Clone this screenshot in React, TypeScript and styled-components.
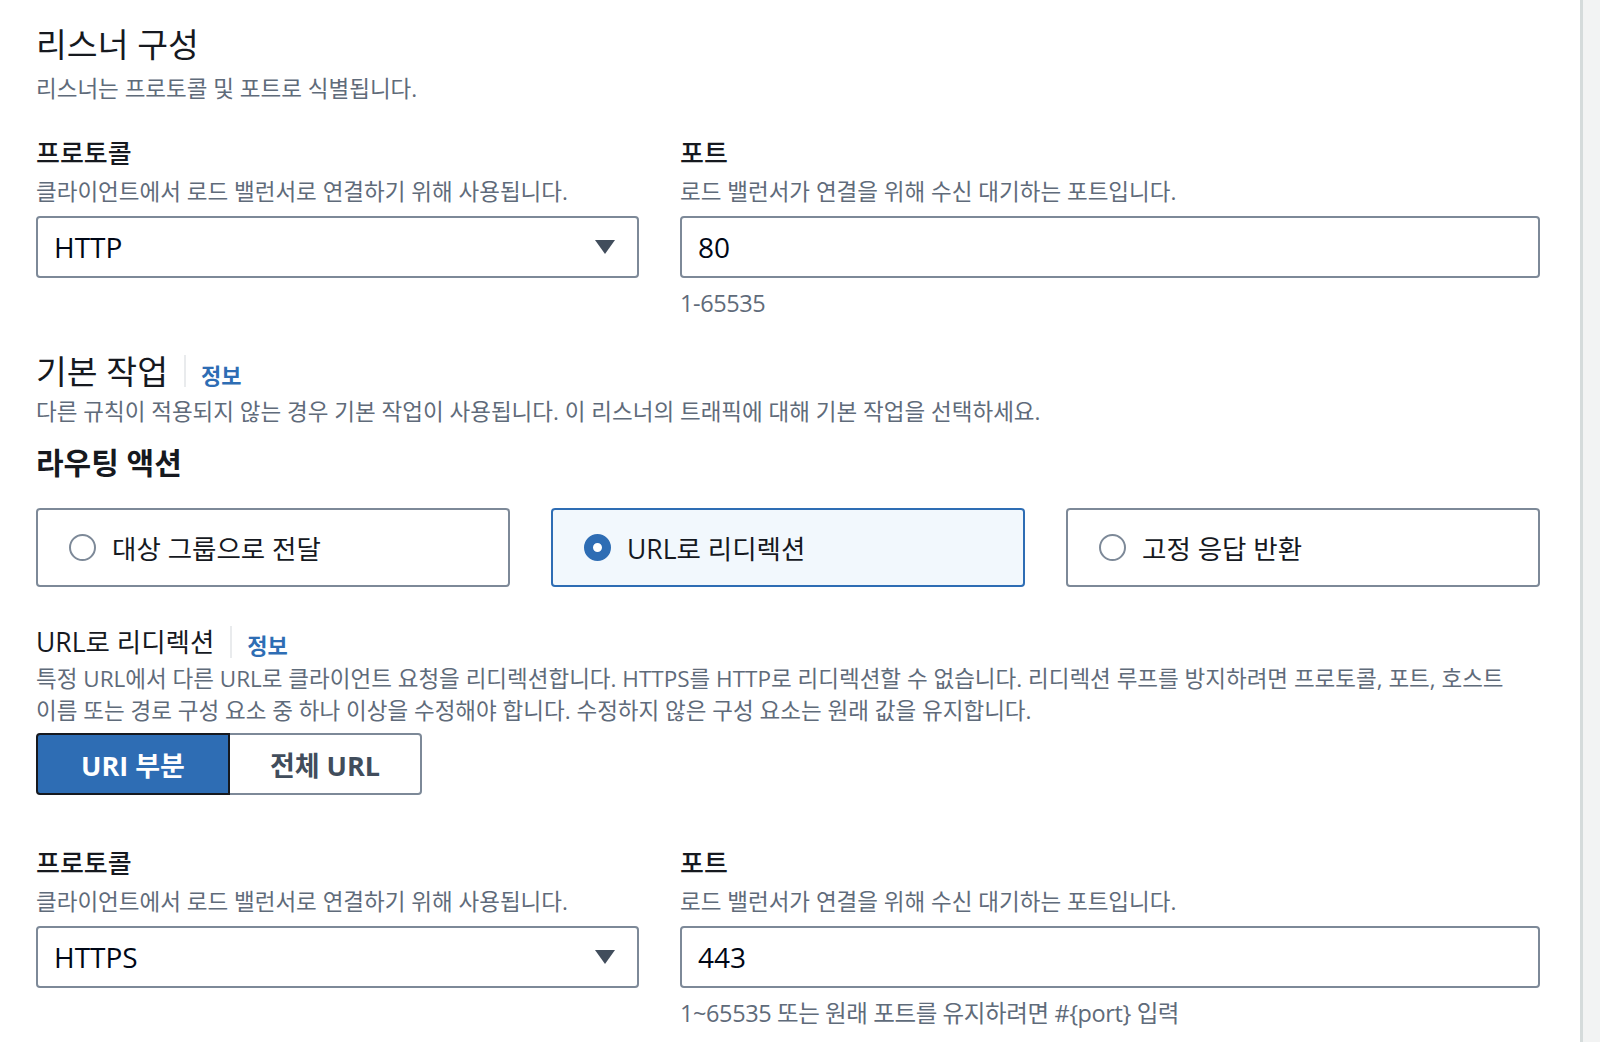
import React from "react";
import styled, { createGlobalStyle } from "styled-components";

const FONT = `"Open Sans", "Noto Sans CJK KR", sans-serif`;

const GlobalStyle = createGlobalStyle`
  html, body {
    margin: 0;
    padding: 0;
    background: #ffffff;
  }
  body {
    font-family: ${FONT};
    color: #16191f;
    -webkit-font-smoothing: antialiased;
  }
  * {
    box-sizing: border-box;
  }
`;

const Page = styled.div`
  display: flex;
  min-height: 1042px;
  background: #ffffff;
`;

const Main = styled.main`
  flex: 1;
  min-width: 0;
  padding: 24px 40px 0 36px;
`;

const SideRail = styled.aside`
  width: 20px;
  flex-shrink: 0;
  background: #f2f3f3;
  border-left: 3px solid #d5dbdb;
`;

const Title = styled.h2<{ $small?: boolean }>`
  margin: 0;
  font-size: ${(p) => (p.$small ? "26.5px" : "33.5px")};
  line-height: ${(p) => (p.$small ? "36px" : "40px")};
  font-weight: 400;
  color: #16191f;
`;

const HeadingRow = styled.div<{ $mt: number }>`
  display: flex;
  align-items: center;
  margin-top: ${(p) => p.$mt}px;
`;

const InfoDivider = styled.span`
  width: 2px;
  height: 32px;
  margin: 0 15px 0 16px;
  background: #e9ebed;
`;

const InfoLink = styled.a`
  padding-top: 5px;
  font-size: 22px;
  font-weight: 700;
  color: #2e6db4;
  text-decoration: none;
  cursor: pointer;
`;

const Description = styled.p<{ $mt: number }>`
  margin: ${(p) => p.$mt}px 0 0;
  font-size: 22.5px;
  line-height: 32px;
  color: #5f6b7a;
`;

const GroupTitle = styled.h3`
  margin: 17px 0 0;
  font-size: 30px;
  line-height: 36px;
  font-weight: 700;
  color: #16191f;
`;

const FieldGrid = styled.div<{ $mt: number }>`
  display: grid;
  grid-template-columns: 603px 1fr;
  column-gap: 41px;
  align-items: start;
  margin-top: ${(p) => p.$mt}px;
`;

const Field = styled.div`
  display: flex;
  flex-direction: column;
`;

const Label = styled.label`
  font-size: 26px;
  line-height: 32px;
  font-weight: 500;
  color: #16191f;
`;

const FieldDescription = styled.span`
  margin-top: 7px;
  font-size: 22.5px;
  line-height: 32px;
  color: #5f6b7a;
`;

const SelectBox = styled.div`
  display: flex;
  align-items: center;
  justify-content: space-between;
  height: 62px;
  margin-top: 8px;
  padding: 0 22px 0 16px;
  border: 2px solid #7d8998;
  border-radius: 4px;
  background: #ffffff;
  font-size: 28px;
  color: #000716;
  cursor: pointer;
`;

const TextInput = styled.input`
  height: 62px;
  margin-top: 8px;
  padding: 0 16px;
  border: 2px solid #7d8998;
  border-radius: 4px;
  background: #ffffff;
  font-family: ${FONT};
  font-size: 28px;
  color: #000716;
  outline: none;
`;

const Hint = styled.span`
  margin-top: 9px;
  font-size: 23.5px;
  line-height: 32px;
  letter-spacing: -0.4px;
  color: #5f6b7a;
`;

const TileGroup = styled.div`
  display: grid;
  grid-template-columns: repeat(3, 1fr);
  column-gap: 41px;
  margin-top: 27px;
`;

const Tile = styled.div<{ $selected?: boolean }>`
  display: flex;
  align-items: center;
  gap: 16px;
  height: 79px;
  padding-left: 31px;
  border: 2px solid ${(p) => (p.$selected ? "#2e6db4" : "#7d8998")};
  border-radius: 4px;
  background: ${(p) => (p.$selected ? "#f2f8fd" : "#ffffff")};
  font-size: 26.5px;
  color: #16191f;
  cursor: pointer;
`;

const Radio = styled.span<{ $checked?: boolean }>`
  width: 27px;
  height: 27px;
  flex-shrink: 0;
  border-radius: 50%;
  border: ${(p) => (p.$checked ? "9px solid #2e6db4" : "2px solid #7d8998")};
  background: #ffffff;
`;

const Segmented = styled.div`
  display: flex;
  width: fit-content;
  margin-top: 6px;
`;

const Segment = styled.button<{ $active?: boolean }>`
  height: 62px;
  padding: 0 ${(p) => (p.$active ? "43px" : "40px")};
  border: 2px solid ${(p) => (p.$active ? "#16191f" : "#7d8998")};
  border-left-width: ${(p) => (p.$active ? "2px" : "0")};
  border-radius: ${(p) => (p.$active ? "4px 0 0 4px" : "0 4px 4px 0")};
  background: ${(p) => (p.$active ? "#2e6db4" : "#ffffff")};
  font-family: ${FONT};
  font-size: 27px;
  font-weight: 700;
  color: ${(p) => (p.$active ? "#ffffff" : "#414d5c")};
  cursor: pointer;
`;

const Caret = () => (
  <svg width="20" height="14" viewBox="0 0 20 14" aria-hidden="true">
    <path d="M0 0 H20 L10 14 Z" fill="#414d5c" />
  </svg>
);

interface ListenerFieldsProps {
  protocol: string;
  port: string;
  portHint: string;
  mt: number;
}

const ListenerFields: React.FunctionComponent<ListenerFieldsProps> = ({
  protocol,
  port,
  portHint,
  mt,
}) => (
  <FieldGrid $mt={mt}>
    <Field>
      <Label>프로토콜</Label>
      <FieldDescription>클라이언트에서 로드 밸런서로 연결하기 위해 사용됩니다.</FieldDescription>
      <SelectBox>
        {protocol}
        <Caret />
      </SelectBox>
    </Field>
    <Field>
      <Label>포트</Label>
      <FieldDescription>로드 밸런서가 연결을 위해 수신 대기하는 포트입니다.</FieldDescription>
      <TextInput value={port} readOnly />
      <Hint>{portHint}</Hint>
    </Field>
  </FieldGrid>
);

const actions = [
  { id: "forward", label: "대상 그룹으로 전달" },
  { id: "redirect", label: "URL로 리디렉션" },
  { id: "fixed", label: "고정 응답 반환" },
];

const App = () => {
  const selectedAction = "redirect";

  return (
    <>
      <GlobalStyle />
      <Page>
        <Main>
          <Title>리스너 구성</Title>
          <Description $mt={9}>리스너는 프로토콜 및 포트로 식별됩니다.</Description>

          <ListenerFields protocol="HTTP" port="80" portHint="1-65535" mt={32} />

          <HeadingRow $mt={32}>
            <Title>기본 작업</Title>
            <InfoDivider />
            <InfoLink>정보</InfoLink>
          </HeadingRow>
          <Description $mt={5}>
            다른 규칙이 적용되지 않는 경우 기본 작업이 사용됩니다. 이 리스너의 트래픽에 대해 기본 작업을 선택하세요.
          </Description>

          <GroupTitle>라우팅 액션</GroupTitle>
          <TileGroup>
            {actions.map((el) => (
              <Tile key={el.id} $selected={el.id === selectedAction}>
                <Radio $checked={el.id === selectedAction} />
                {el.label}
              </Tile>
            ))}
          </TileGroup>

          <HeadingRow $mt={36}>
            <Title $small>URL로 리디렉션</Title>
            <InfoDivider />
            <InfoLink>정보</InfoLink>
          </HeadingRow>
          <Description $mt={3}>
            특정 URL에서 다른 URL로 클라이언트 요청을 리디렉션합니다. HTTPS를 HTTP로 리디렉션할 수 없습니다. 리디렉션 루프를 방지하려면 프로토콜, 포트, 호스트
            <br />
            이름 또는 경로 구성 요소 중 하나 이상을 수정해야 합니다. 수정하지 않은 구성 요소는 원래 값을 유지합니다.
          </Description>

          <Segmented>
            <Segment $active>URI 부분</Segment>
            <Segment>전체 URL</Segment>
          </Segmented>

          <ListenerFields
            protocol="HTTPS"
            port="443"
            portHint="1~65535 또는 원래 포트를 유지하려면 #{port} 입력"
            mt={52}
          />
        </Main>
        <SideRail />
      </Page>
    </>
  );
};

export default App;
